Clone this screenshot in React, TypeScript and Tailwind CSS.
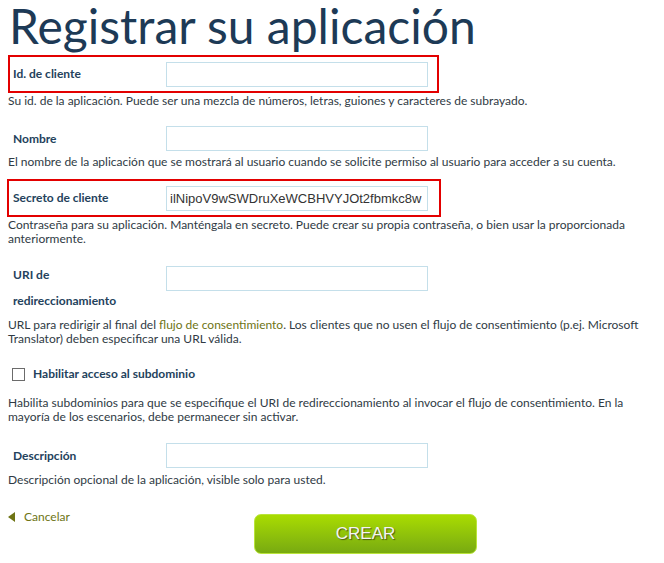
import React from "react";

const labelCls = "w-[158px] shrink-0 pl-[5px] text-[12px] font-bold text-[#24425c]";
const inputCls = "h-[25px] w-[262px] border border-[#c4dfea] bg-white px-[3px] text-[13px] text-[#333] outline-none";
const helpCls = "text-[12px] leading-[14px] text-[#2f3a44]";

const Field = ({ label }: { label: string }) => (
	<div className="flex items-center">
		<label className={labelCls}>{label}</label>
		<input className={inputCls} />
	</div>
);

export default function App() {
	return (
		<div className="h-[563px] w-[664px] overflow-hidden bg-white pl-[8px] pr-[10px]" style={{ fontFamily: "Lato, 'Open Sans', sans-serif" }}>
			<h1 className="pl-[1px] text-[48px] leading-[51px] font-normal text-[#1d3a56]">Registrar su aplicación</h1>

			<div className="mt-[4px] flex h-[38px] w-[431px] items-center border-2 border-[#e30000] pl-[3px]">
				<label className="w-[153px] shrink-0 text-[12px] font-bold text-[#24425c]">Id. de cliente</label>
				<input className={inputCls} />
			</div>
			<p className={`${helpCls} mt-[1px]`}>Su id. de la aplicación. Puede ser una mezcla de números, letras, guiones y caracteres de subrayado.</p>

			<div className="mt-[18px]">
				<Field label="Nombre" />
			</div>
			<p className={`${helpCls} mt-[4px]`}>El nombre de la aplicación que se mostrará al usuario cuando se solicite permiso al usuario para acceder a su cuenta.</p>

			<div className="-ml-[1px] mt-[10px] flex h-[38px] w-[434px] items-center border-2 border-[#e30000] pl-[4px]">
				<label className="w-[153px] shrink-0 text-[12px] font-bold text-[#24425c]">Secreto de cliente</label>
				<input
					className={inputCls}
					defaultValue="ilNipoV9wSWDruXeWCBHVYJOt2fbmkc8w"
					style={{ fontFamily: "'Liberation Sans', Arial, sans-serif" }}
				/>
			</div>
			<p className={`${helpCls} mt-[1px]`}>
				Contraseña para su aplicación. Manténgala en secreto. Puede crear su propia contraseña, o bien usar la proporcionada anteriormente.
			</p>

			<div className="mt-[20px] flex items-start">
				<label className={`${labelCls} -mt-[4px] leading-[26px]`}>
					URI de
					<br />
					redireccionamiento
				</label>
				<input className={inputCls} />
			</div>
			<p className={`${helpCls} mt-[4px]`}>
				URL para redirigir al final del <span className="text-[#6e7414]">flujo de consentimiento</span>. Los clientes que no usen el flujo de consentimiento (p.ej. Microsoft Translator) deben especificar una URL válida.
			</p>

			<div className="mt-[19px] flex items-center pl-[4px]">
				<span className="h-[13px] w-[13px] border border-[#6b6b6b] bg-white" />
				<span className="ml-[8px] text-[12px] font-bold text-[#24425c]">Habilitar acceso al subdominio</span>
			</div>
			<p className={`${helpCls} mt-[13px]`}>
				Habilita subdominios para que se especifique el URI de redireccionamiento al invocar el flujo de consentimiento. En la mayoría de los escenarios, debe permanecer sin activar.
			</p>

			<div className="mt-[19px]">
				<Field label="Descripción" />
			</div>
			<p className={`${helpCls} mt-[5px]`}>Descripción opcional de la aplicación, visible solo para usted.</p>

			<div className="mt-[22px] flex items-start">
				<a className="flex w-[246px] items-center text-[12px] leading-[16px] text-[#6e7414]" href="#">
					<svg width="8" height="10" viewBox="0 0 8 10" className="mr-[8px]">
						<path d="M7 0 L0 5 L7 10 Z" fill="#6e7414" />
					</svg>
					Cancelar
				</a>
				<button
					className="mt-[5px] h-[40px] w-[223px] rounded-[7px] border border-[#b9e43a] bg-gradient-to-b from-[#a9dc00] to-[#78aa10] text-[17px] text-[#f4f4f4] [text-shadow:1px_1px_1px_#4a5a10]"
					style={{ fontFamily: "'Liberation Sans', Arial, sans-serif" }}
				>
					CREAR
				</button>
			</div>
		</div>
	);
}
